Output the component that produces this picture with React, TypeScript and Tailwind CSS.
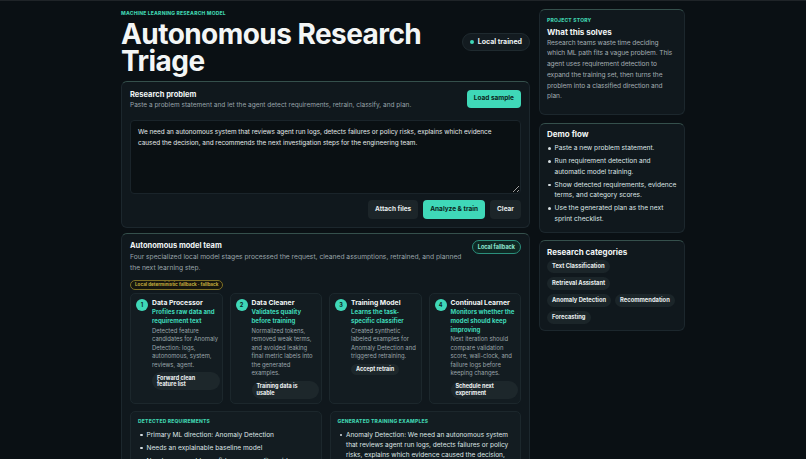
import React from "react";

const steps = [
  {
    n: "1",
    title: "Data Processor",
    sub: "Profiles raw data and requirement text",
    desc: "Detected feature candidates for Anomaly Detection: logs, autonomous, system, reviews, agent.",
    pill: "Forward clean feature list",
  },
  {
    n: "2",
    title: "Data Cleaner",
    sub: "Validates quality before training",
    desc: "Normalized tokens, removed weak terms, and avoided leaking final metric labels into the generated examples.",
    pill: "Training data is usable",
  },
  {
    n: "3",
    title: "Training Model",
    sub: "Learns the task-specific classifier",
    desc: "Created synthetic labeled examples for Anomaly Detection and triggered retraining.",
    pill: "Accept retrain",
  },
  {
    n: "4",
    title: "Continual Learner",
    sub: "Monitors whether the model should keep improving",
    desc: "Next iteration should compare validation score, wall-clock, and failure logs before keeping changes.",
    pill: "Schedule next experiment",
  },
];

const chipRows = [
  ["Text Classification"],
  ["Retrieval Assistant"],
  ["Anomaly Detection", "Recommendation"],
  ["Forecasting"],
];

function Bullet({ children }: { children: React.ReactNode }) {
  return (
    <li className="flex gap-[4px] pl-[2px]">
      <span className="mt-[4px] h-[2.5px] w-[2.5px] shrink-0 rounded-full bg-[#d6dde0]" />
      <span>{children}</span>
    </li>
  );
}

export default function App() {
  return (
    <div
      className="min-h-screen border-t border-[#1f2428] bg-[#0a1014] text-[#e8eeee]"
      style={{ fontFamily: "Inter, 'Noto Sans', sans-serif" }}
    >
      <div className="mx-auto grid w-[564px] grid-cols-[409px_146px] gap-[9px] pt-[8px]">
        {/* Left column */}
        <div className="flex flex-col">
          <div className="flex h-[72px] items-start justify-between">
            <div>
              <div className="text-[5px] font-extrabold uppercase leading-[8px] tracking-[0.04em] text-[#3fcfac]">
                Machine learning research model
              </div>
              <h1 className="mt-[4px] text-[28px] font-bold leading-[27px] tracking-[-0.02em] text-[#f3f6f6]">
                Autonomous Research
                <br />
                Triage
              </h1>
            </div>
            <div className="mt-[24px] flex h-[18px] items-center gap-[4px] rounded-full border border-[#1f2a2f] bg-[#131b20] px-[7px] text-[7px] font-bold text-[#eef3f3]">
              <span className="h-[4px] w-[4px] rounded-full bg-[#3fd8b8]" />
              Local trained
            </div>
          </div>

          {/* Research problem card */}
          <div className="rounded-[6px] border border-[#1c272d] border-t-[#35504c] bg-[#10181d] px-[8px] pb-[8px] pt-[7px]">
            <div className="flex items-start justify-between">
              <div>
                <div className="text-[7.5px] font-bold leading-[11px] text-[#f1f5f5]">Research problem</div>
                <div className="text-[6.5px] leading-[11px] text-[#99a4aa]">
                  Paste a problem statement and let the agent detect requirements, retrain, classify, and plan.
                </div>
              </div>
              <button className="mt-[1px] h-[18px] rounded-[4px] bg-[#3fd8b8] px-[7px] text-[6.5px] font-bold text-[#0b1f1b]">
                Load sample
              </button>
            </div>
            <textarea
              readOnly
              defaultValue="We need an autonomous system that reviews agent run logs, detects failures or policy risks, explains which evidence caused the decision, and recommends the next investigation steps for the engineering team."
              className="mt-[9px] block h-[74px] w-full resize-y rounded-[4px] border border-[#1a242a] bg-[#0a1013] px-[7px] py-[6px] text-[6.4px] leading-[11px] text-[#e3e9ea] outline-none"
            />
            <div className="mt-[6px] flex justify-end gap-[5px]">
              <button className="h-[19px] rounded-[4px] bg-[#1c2529] px-[7px] text-[6.5px] font-bold text-[#e6ecec]">
                Attach files
              </button>
              <button className="h-[19px] rounded-[4px] bg-[#3fd8b8] px-[7px] text-[6.5px] font-bold text-[#0b1f1b]">
                Analyze &amp; train
              </button>
              <button className="h-[19px] rounded-[4px] bg-[#1c2529] px-[7px] text-[6.5px] font-bold text-[#e6ecec]">
                Clear
              </button>
            </div>
          </div>

          {/* Model team card */}
          <div className="mt-[5px] rounded-[6px] border border-[#1c272d] border-t-[#35504c] bg-[#10181d] px-[8px] pb-[8px] pt-[6px]">
            <div className="flex items-start justify-between gap-[10px]">
              <div className="flex-1">
                <div className="text-[7.5px] font-bold leading-[11px] text-[#f1f5f5]">Autonomous model team</div>
                <div className="mt-[1px] text-[6.7px] leading-[11px] text-[#99a4aa]">
                  Four specialized local model stages processed the request, cleaned assumptions, retrained, and planned the next learning step.
                </div>
              </div>
              <div className="flex h-[14px] shrink-0 items-center rounded-full border border-[#2b8f7c] bg-[#0f2824] px-[5px] text-[5.5px] font-bold text-[#8fe8d3]">
                Local fallback
              </div>
            </div>
            <div className="mt-[6px] flex h-[10px] w-fit items-center rounded-full border border-[#7d6e25] bg-[#16160e] px-[4px] text-[4.6px] font-bold leading-[8px] text-[#c4ad3e]">
              Local deterministic fallback · fallback
            </div>
            <div className="mt-[3px] grid grid-cols-4 gap-[7px]">
              {steps.map((s) => (
                <div
                  key={s.n}
                  className="flex h-[111px] gap-[4px] rounded-[5px] border border-[#1c272c] bg-[#131c21] pl-[5px] pr-[2px] pt-[4px]"
                >
                  <div className="mt-[1px] flex h-[12px] w-[12px] shrink-0 items-center justify-center rounded-full bg-[#3fd8b8] text-[5.5px] font-bold text-[#0b1f1b]">
                    {s.n}
                  </div>
                  <div className="flex min-w-0 flex-col">
                    <div className="text-[6.8px] font-bold leading-[10px] text-[#f1f5f5]">{s.title}</div>
                    <div className="text-[6.1px] font-bold leading-[8.8px] text-[#3fd8b8]">{s.sub}</div>
                    <div className="mt-[1px] text-[5.9px] leading-[8.5px] text-[#9aa5ab]">{s.desc}</div>
                    <div className="mt-[3px] self-start rounded-full bg-[#1d272b] px-[5px] py-[2.5px] text-[5.5px] font-bold leading-[6.5px] text-[#f1f5f5]">
                      {s.pill}
                    </div>
                  </div>
                </div>
              ))}
            </div>
            <div className="mt-[7px] grid grid-cols-2 gap-[8px]">
              <div className="h-[60px] rounded-[5px] border border-[#1c272c] bg-[#131c21] px-[7px] pt-[6px]">
                <div className="text-[5px] font-extrabold uppercase tracking-[0.04em] text-[#3fcfac]">
                  Detected requirements
                </div>
                <ul className="mt-[4px] flex flex-col gap-[3px] text-[6.6px] leading-[10px] text-[#dfe6e7]">
                  <Bullet>Primary ML direction: Anomaly Detection</Bullet>
                  <Bullet>Needs an explainable baseline model</Bullet>
                  <Bullet>Needs measurable confidence or quality evidence</Bullet>
                </ul>
              </div>
              <div className="h-[60px] rounded-[5px] border border-[#1c272c] bg-[#131c21] px-[7px] pt-[6px]">
                <div className="text-[5px] font-extrabold uppercase tracking-[0.04em] text-[#3fcfac]">
                  Generated training examples
                </div>
                <ul className="mt-[4px] flex flex-col gap-[3px] text-[6.5px] leading-[10px] text-[#dfe6e7]">
                  <Bullet>
                    Anomaly Detection: We need an autonomous system that reviews agent run logs, detects failures or policy risks, explains which evidence caused the decision, and recommends the next investigation steps.
                  </Bullet>
                </ul>
              </div>
            </div>
          </div>
        </div>

        {/* Right column */}
        <div className="flex flex-col">
          <div className="rounded-[6px] border border-[#1c272d] border-t-[#35504c] bg-[#10181d] px-[6px] pb-[12px] pt-[7px]">
            <div className="pl-[1px] text-[5px] font-extrabold uppercase tracking-[0.04em] text-[#3fcfac]">Project story</div>
            <div className="mt-[2px] pl-[1px] text-[8px] font-bold leading-[11px] text-[#f1f5f5]">What this solves</div>
            <p className="pl-[1px] text-[6.6px] leading-[10.8px] tracking-[-0.012em] text-[#a3adb2]">
              Research teams waste time deciding which ML path fits a vague problem. This agent uses requirement detection to expand the training set, then turns the problem into a classified direction and plan.
            </p>
          </div>
          <div className="mt-[8px] rounded-[6px] border border-[#1c272d] border-t-[#35504c] bg-[#10181d] px-[6px] pb-[8px] pt-[5px]">
            <div className="pl-[1px] text-[8px] font-bold leading-[11px] text-[#f1f5f5]">Demo flow</div>
            <ul className="mt-[3px] flex flex-col gap-[2.5px] text-[6.6px] leading-[10.5px] text-[#dfe6e7]">
              <Bullet>Paste a new problem statement.</Bullet>
              <Bullet>Run requirement detection and automatic model training.</Bullet>
              <Bullet>Show detected requirements, evidence terms, and category scores.</Bullet>
              <Bullet>Use the generated plan as the next sprint checklist.</Bullet>
            </ul>
          </div>
          <div className="mt-[7px] rounded-[6px] border border-[#1c272d] border-t-[#35504c] bg-[#10181d] px-[7px] pb-[6px] pt-[6px]">
            <div className="text-[8px] font-bold leading-[11px] text-[#f1f5f5]">Research categories</div>
            <div className="mt-[2px] flex flex-col gap-[4px]">
              {chipRows.map((row, i) => (
                <div key={i} className="flex gap-[4px]">
                  {row.map((c) => (
                    <span
                      key={c}
                      className="flex h-[13px] items-center rounded-full bg-[#1b2529] px-[5px] text-[5.8px] font-bold text-[#e8eeee]"
                    >
                      {c}
                    </span>
                  ))}
                </div>
              ))}
            </div>
          </div>
        </div>
      </div>
    </div>
  );
}
